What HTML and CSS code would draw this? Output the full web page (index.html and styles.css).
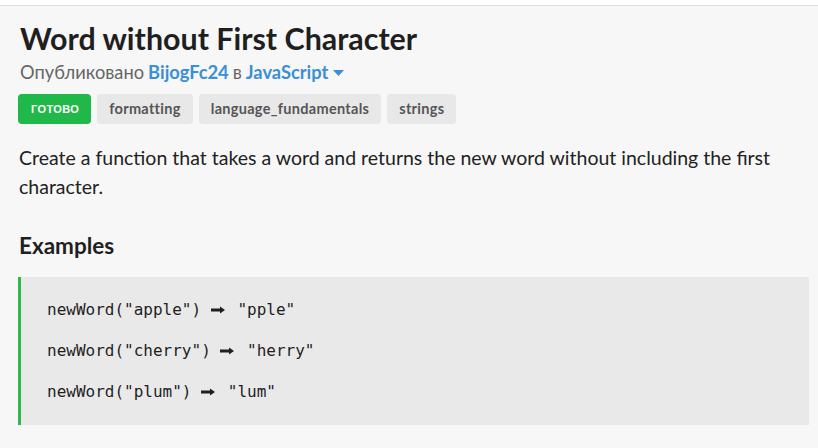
FILE: index.html
```
<!DOCTYPE html>
<html>
<head>
<meta charset="utf-8">
<link rel="stylesheet" href="styles.css">
</head>
<body>
<div class="topbar"></div>
<main class="page">
  <h1 class="title">Word without First Character</h1>
  <div class="meta">
    <span class="muted">Опубликовано</span>
    <a class="link">BijogFc24</a>
    <span class="muted">в</span>
    <a class="link">JavaScript</a>
    <svg class="caret" width="11" height="6" viewBox="0 0 11 6"><path d="M0 0 L11 0 L5.5 6 Z" fill="#3a8fd8"/></svg>
  </div>
  <div class="tags">
    <span class="tag tag-done">ГОТОВО</span>
    <span class="tag">formatting</span>
    <span class="tag">language_fundamentals</span>
    <span class="tag">strings</span>
  </div>
  <p class="desc">Create a function that takes a word and returns the new word without including the first character.</p>
  <h2 class="subtitle">Examples</h2>
  <div class="code">
    <div class="code-line">newWord("apple") <span class="arrow"><svg width="14" height="8" viewBox="0 0 14 8"><path d="M0 2.6 H9 V0.5 L14 4 L9 7.5 V5.4 H0 Z" fill="#1f1f1f"/></svg></span> "pple"</div>
    <div class="code-line">newWord("cherry") <span class="arrow"><svg width="14" height="8" viewBox="0 0 14 8"><path d="M0 2.6 H9 V0.5 L14 4 L9 7.5 V5.4 H0 Z" fill="#1f1f1f"/></svg></span> "herry"</div>
    <div class="code-line">newWord("plum") <span class="arrow"><svg width="14" height="8" viewBox="0 0 14 8"><path d="M0 2.6 H9 V0.5 L14 4 L9 7.5 V5.4 H0 Z" fill="#1f1f1f"/></svg></span> "lum"</div>
  </div>
</main>
</body>
</html>
```
FILE: styles.css
```
html, body {
  margin: 0;
  padding: 0;
  background: #f7f7f7;
}
body {
  font-family: Lato, "Noto Sans", sans-serif;
  color: #222;
}
.topbar {
  height: 5px;
  background: #fff;
  border-bottom: 1px solid #dedede;
}
.page {
  padding: 13px 9px 0 18px;
}
.title {
  margin: 0 0 0 2px;
  font-size: 30.4px;
  font-weight: 700;
  line-height: 38px;
  color: #1f1f1f;
}
.meta {
  margin: 1px 0 0 2px;
  font-size: 18.3px;
  line-height: 28px;
  display: flex;
  align-items: center;
  gap: 4px;
}
.muted {
  color: #666;
}
.link {
  color: #3a8fd8;
  font-weight: 700;
}
.caret {
  margin-left: 1px;
  margin-top: 1px;
}
.tags {
  display: flex;
  gap: 6px;
  margin-top: 8px;
}
.tag {
  background: #e8e8e8;
  color: #555;
  font-size: 14.5px;
  font-weight: 700;
  letter-spacing: 0.3px;
  height: 30px;
  line-height: 30px;
  padding: 0 12px;
  border-radius: 4px;
}
.tag-done {
  background: #21b84a;
  color: #fff;
  font-family: "Liberation Sans", Arial, sans-serif;
  font-size: 11px;
  font-weight: 700;
  letter-spacing: 0.4px;
  padding: 0 12px 0 13px;
}
.desc {
  margin: 19px 0 0 1px;
  font-size: 19.5px;
  line-height: 29px;
  color: #222;
}
.subtitle {
  margin: 30px 0 0 1px;
  font-size: 22.5px;
  font-weight: 700;
  line-height: 30px;
  color: #1f1f1f;
}
.code {
  margin-top: 16px;
  background: #e9e9e9;
  border-left: 3px solid #2fb84c;
  padding: 12px 0 13px 26px;
  font-family: "DejaVu Sans Mono", monospace;
  font-size: 16px;
  color: #1f1f1f;
}
.code-line {
  line-height: 41px;
}
.arrow {
  display: inline-block;
  width: 17px;
  vertical-align: middle;
  line-height: 0;
}
.arrow svg {
  display: block;
  margin-top: -2px;
}
```
